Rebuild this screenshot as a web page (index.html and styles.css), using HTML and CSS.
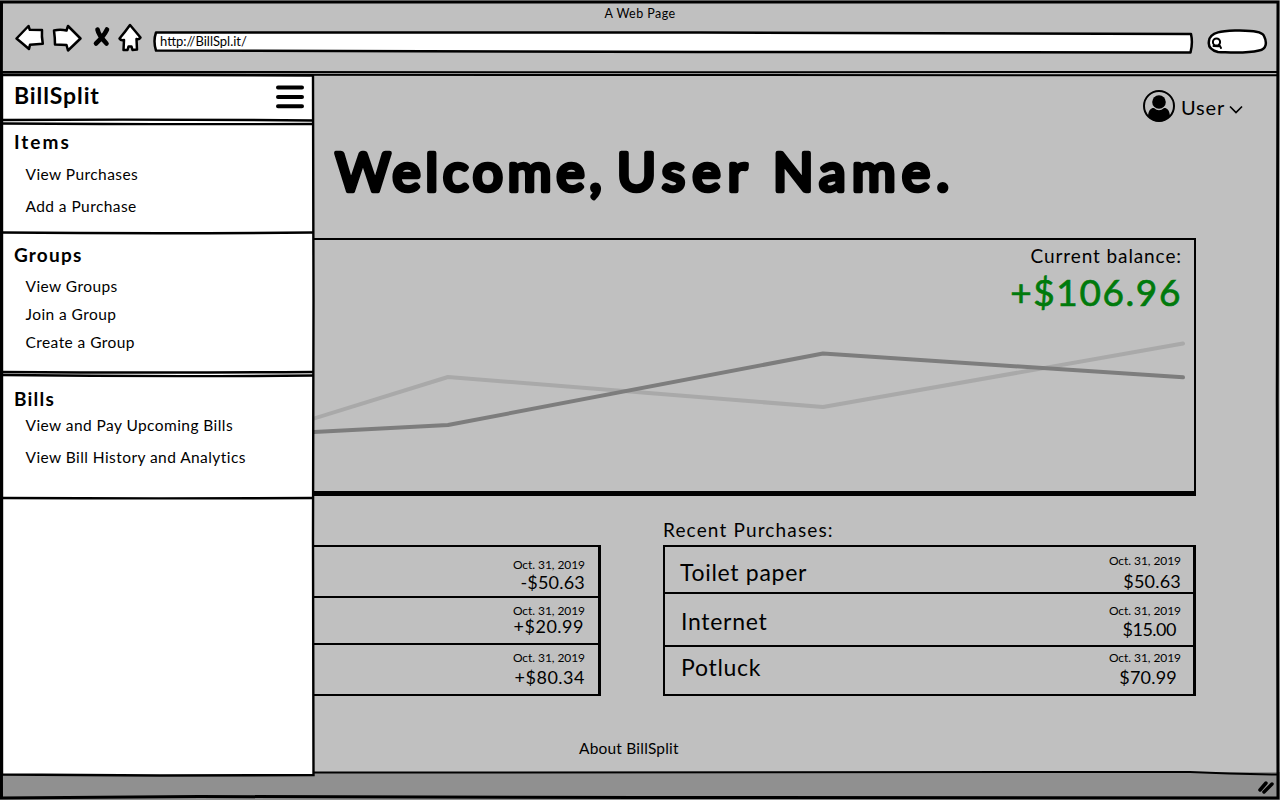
FILE: index.html
```html
<!DOCTYPE html>
<html lang="en">
<head>
<meta charset="utf-8">
<title>A Web Page</title>
<link rel="stylesheet" href="styles.css">
</head>
<body>
<div class="window">
  <header class="toolbar">
    <div class="window-title">A Web Page</div>
    <div class="controls">
      <svg class="nav-icons" width="130" height="34" viewBox="14 20 130 34">
        <g class="outline">
          <path d="M16.5 37.5 L28.5 25 L29.8 28.8 L42 29 Q41.5 35 42.8 42.8 L30 43.8 L29 48 Q22 42 16.5 37.5Z"/>
          <path d="M54 29.5 Q60 28 66.5 29.5 L68 25 L80.5 37.500 L68 49.500 L66.500 44 L55 43.500 Q55 37 54 29.500Z"/>
          <path d="M130 24 L140.500 36.500 Q139 39 136.500 38 L137 48.500 L132.500 49 L131.500 45.500 L128.500 45.500 L127.500 49 L123.500 49 L124 39 Q121 40 119.500 37.500 Q125 31 130 24Z"/>
        </g>
        <path class="cross" d="M97.500 28.500 Q98.500 34 106.500 42.500 M107 28.500 Q104 35 96 42.500"/>
      </svg>
      <div class="address">
        <svg class="address-frame" width="1042" height="26" viewBox="152 28 1042 26"><path class="outline" d="M156 31.500 L700 31.500 L1191 33 Q1193 42 1190.500 51.500 L700 51 L156 49.500 Q153 40 156 31.500Z"/></svg>
        <span class="url">http://BillSpl.it/</span>
      </div>
      <svg class="search" width="64" height="28" viewBox="1206 27 64 28">
        <path class="outline" d="M1209 40 C1210 30 1225 30 1237 29.500 C1252 30 1262 30 1264 35 C1267 41 1267 48 1259 49.500 C1244 53 1232 51.500 1218 51 C1210 49 1208 45 1209 40Z"/>
        <circle class="lens" cx="1216.500" cy="41" r="3.600"/><path class="lens" d="M1219 43.500 L1221 47 M1213.500 45 L1218.500 45.200"/>
      </svg>
    </div>
  </header>

  <main class="page">
    <div class="user-menu">
      <svg width="34" height="34" viewBox="0 0 34 34"><circle cx="17" cy="17" r="15" fill="none" stroke="#000" stroke-width="2"/><circle cx="17" cy="13" r="6.800"/><path d="M6 27 C6.500 20 10 18.500 12 19 Q17 23.500 22 19 C24 18.500 27.500 20 28 27 Q23 32.500 17 32.500 Q11 32.500 6 27Z"/></svg>
      <span class="user-name">User</span>
      <svg width="16" height="12" viewBox="0 0 16 12"><path d="M2 2.500 L8 8.500 L14 2.500" fill="none" stroke="#000" stroke-width="1.700"/></svg>
    </div>
    <h1 class="welcome">
      <svg width="630" height="80" viewBox="330 135 630 80"><text y="190.500"><tspan x="335.500" textLength="266">Welcome,</tspan> <tspan x="617" textLength="129">User</tspan> <tspan x="773" textLength="176">Name.</tspan></text></svg>
    </h1>
    <section class="balance-card">
      <svg class="chart" width="880" height="120" viewBox="314 320 880 120">
        <polyline class="series previous" points="306,421 448,377 823,407 1183,343.500"/>
        <polyline class="series current" points="306,432.500 448,425 823,353.500 1183,377.300"/>
      </svg>
      <div class="balance-label">Current balance:</div>
      <div class="balance-value">+$106.96</div>
    </section>
    <section class="tables">
      <div class="table bills">
        <div class="row b1"><span></span><div class="amount"><small>Oct. 31, 2019</small><b>-$50.63</b></div></div>
        <div class="row b2"><span></span><div class="amount"><small>Oct. 31, 2019</small><b>+$20.99</b></div></div>
        <div class="row b3"><span></span><div class="amount"><small>Oct. 31, 2019</small><b>+$80.34</b></div></div>
      </div>
      <div class="purchases-column">
        <h2 class="table-title">Recent Purchases:</h2>
        <div class="table purchases">
          <div class="row p1"><span class="item toilet">Toilet paper</span><div class="amount"><small>Oct. 31, 2019</small><b>$50.63</b></div></div>
          <div class="row p2"><span class="item">Internet</span><div class="amount"><small>Oct. 31, 2019</small><b>$15.00</b></div></div>
          <div class="row p3"><span class="item">Potluck</span><div class="amount"><small>Oct. 31, 2019</small><b>$70.99</b></div></div>
        </div>
      </div>
    </section>
    <footer class="about">About BillSplit</footer>
  </main>

  <div class="status-bar"></div>

  <svg class="window-frame" width="1280" height="800" viewBox="0 0 1280 800">
    <path d="M1.500 2 L1278 2 Q1276.500 400 1278 798 L640 797.500 L200 796.500 L1.500 798 Q0 400 1.500 2Z"/>
    <path class="thin" d="M2 72 L640 72.300 L1277 72 M2 74.500 L640 75 L1277 75.300 M314 772.500 L1190 772 Q1230 774 1277 774.500"/>
    <path class="grip" d="M1260 790 L1266 783 M1264 792 L1272 784"/>
  </svg>

  <nav class="sidebar">
    <svg class="sidebar-frame" width="316" height="706" viewBox="0 72 316 706">
      <path d="M2 75 L160 75 L313 75.500 L313.500 300 L313 540 L313.500 775 L160 775.500 L2 774.500 Q1 420 2 75Z"/>
      <path d="M2 120 Q150 119 313 120.500 M2 123.500 Q150 124.500 313 124 M2 232.500 Q160 234 313 232.500 M2 372 Q160 373 313 372 M2 375 Q160 377 313 375.500 M2 498 Q160 498.700 313 498"/>
    </svg>
    <div class="brand-row">
      <span class="brand">BillSplit</span>
      <svg width="28" height="24" viewBox="0 0 28 24"><path d="M2 2.500 H26 M2 12 H26 M2 21.300 H26" stroke="#000" stroke-width="4" stroke-linecap="round"/></svg>
    </div>
    <section class="group items"><h3>Items</h3><a>View Purchases</a><a>Add a Purchase</a></section>
    <section class="group groups"><h3>Groups</h3><a>View Groups</a><a>Join a Group</a><a>Create a Group</a></section>
    <section class="group payments"><h3>Bills</h3><a>View and Pay Upcoming Bills</a><a>View Bill History and Analytics</a></section>
  </nav>
</div>
</body>
</html>
```

FILE: styles.css
```css
* { box-sizing: border-box; }
body { margin: 0; background: #fff; color: #000; font-family: Lato, "Open Sans", sans-serif; overflow: hidden; }
svg { display: block; flex: none; }
h1, h2, h3 { margin: 0; }

.window { position: relative; width: 1280px; height: 800px; display: grid; grid-template-rows: 74px 698px 28px; background: #c0c0c0; }
.window-frame { position: absolute; inset: 0; fill: none; stroke: #000; stroke-width: 3; pointer-events: none; }
.window-frame .thin { stroke-width: 2; }
.window-frame .grip { stroke-width: 3.5; stroke-linecap: round; }

.outline { fill: #fff; stroke: #000; stroke-width: 2.5; stroke-linejoin: round; }
.toolbar { display: flex; flex-direction: column; }
.window-title { height: 28px; line-height: 28px; text-align: center; font-size: 12.5px; letter-spacing: .45px; }
.controls { display: flex; height: 28px; align-items: center; padding-left: 14px; }
.nav-icons { margin-top: -9px; }
.cross { fill: none; stroke: #000; stroke-width: 4.6; stroke-linecap: round; }
.address { position: relative; width: 1042px; height: 26px; margin-left: 8px; padding-left: 8px; line-height: 24px; }
.address-frame { position: absolute; inset: 0; }
.url { position: relative; top: -1px; font-size: 13px; letter-spacing: 0; }
.search { margin-left: 12px; }
.lens { fill: none; stroke: #000; stroke-width: 2; stroke-linecap: round; }

.page { display: flex; flex-direction: column; }
.user-menu { display: flex; align-items: center; justify-content: flex-end; height: 34px; margin-top: 15px; padding-right: 36px; }
.user-name { font-size: 20px; line-height: 34px; margin: 1px 3px 0 5px; letter-spacing: .8px; }
.user-menu svg:last-child { margin-top: 7px; }
.welcome { height: 80px; margin: 12px 0 0 330px; }
.welcome text { font: 400 53px Lato, sans-serif; stroke: #000; stroke-width: 4.6px; stroke-linejoin: round; }

.balance-card { position: relative; height: 258px; width: 896px; margin: 23px 0 0 300px; border: 2px solid #000; border-bottom-width: 5px; padding: 4px 12px; text-align: right; }
.chart { position: absolute; left: 12px; top: 80px; }
.series { fill: none; stroke-width: 4; stroke-linejoin: round; stroke-linecap: round; }
.previous { stroke: #a9a9a9; }
.current { stroke: #7d7d7d; }
.balance-label { font-size: 19px; line-height: 24px; letter-spacing: .9px; }
.balance-value { font-size: 37px; line-height: 47px; color: #007a0c; letter-spacing: 1.6px; -webkit-text-stroke: .7px #007a0c; }

.tables { display: flex; align-items: flex-end; margin-left: 300px; height: 200px; }
.table { border: 2px solid #000; border-width: 2px 3px 2px 2px; }
.bills { width: 301px; }
.purchases-column { margin-left: 62px; width: 533px; }
.table-title { font-size: 19px; font-weight: 400; line-height: 24px; letter-spacing: 1.15px; margin-bottom: 3px; }
.row { display: flex; justify-content: space-between; border-bottom: 2px solid #000; }
.row:last-child { border-bottom: 0; }
.amount { display: flex; flex-direction: column; align-items: flex-end; }
.amount small { font-size: 12px; line-height: 14px; letter-spacing: -.07px; }
.amount b { font-size: 18px; font-weight: 400; line-height: 18px; letter-spacing: .2px; }
.item { font-size: 23px; line-height: 30px; letter-spacing: .7px; padding-left: 16px; }
.toilet { padding-left: 15px; }
.b1 { height: 51px; padding: 11px 13px 0 0; }
.b2 { height: 47px; padding: 6px 13px 0 0; }
.b3 { height: 49px; padding: 6px 13px 0 0; }
.b1 b { margin-top: 1px; }
.b2 b { margin: -1px 1px 0 0; letter-spacing: .5px; }
.b3 b { margin-top: 3px; letter-spacing: .5px; }
.p1 { height: 47px; padding: 7px 12px 0 0; }
.p2 { height: 53px; padding: 10px 12px 0 0; }
.p3 { height: 47px; padding: 4px 12px 0 0; }
.p1 .item { margin-top: 3px; }
.p2 .item { margin-top: 2px; }
.p3 .item { margin-top: 1px; }
.p1 b { margin-top: 4px; }
.p2 b { margin: 2px 5px 0 0; letter-spacing: -.5px; }
.p3 b { margin: 3px 4px 0 0; }
.about { margin: 40px 0 0 579px; font-size: 15.5px; line-height: 24px; letter-spacing: .2px; }

.status-bar { background: #909090; }

.sidebar { position: absolute; left: 0; top: 74px; width: 314px; height: 702px; }
.sidebar-frame { position: absolute; left: 0; top: -2px; fill: none; stroke: #000; stroke-width: 2.4; }
.sidebar-frame path:first-child { fill: #fff; }
.brand-row { position: relative; display: flex; justify-content: space-between; align-items: center; height: 46px; padding: 0 10px 0 14px; }
.brand { font-size: 23px; font-weight: 700; letter-spacing: .9px; margin-top: -4px; }
.group { position: relative; display: flex; flex-direction: column; padding-left: 14px; }
.group h3 { font-size: 19px; font-weight: 700; line-height: 24px; letter-spacing: 1.2px; }
.group a { font-size: 15.5px; padding-left: 11.5px; letter-spacing: .43px; }
.items { height: 113px; padding-top: 10px; }
.items a { line-height: 32px; }
.items h3 { margin-bottom: 4px; letter-spacing: 2px; }
.groups { height: 142px; padding-top: 10px; }
.groups h3 { margin-bottom: 5px; }
.groups a { line-height: 28px; }
.payments { padding-top: 12px; }
.payments a { line-height: 32px; }
.payments h3 { margin-bottom: -2px; }
```
